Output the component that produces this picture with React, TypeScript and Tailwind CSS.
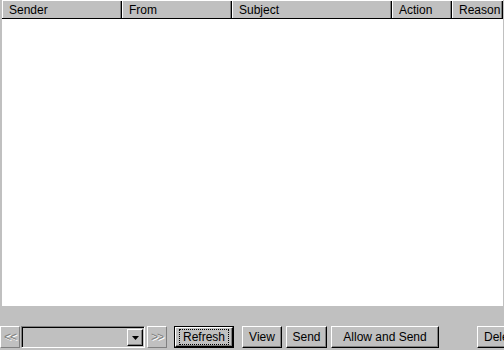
import React from "react";

const cols = [
  { label: "Sender", w: "w-[120px]" },
  { label: "From", w: "w-[110px]" },
  { label: "Subject", w: "w-[160px]" },
  { label: "Action", w: "w-[60px]" },
  { label: "Reason", w: "flex-1" },
];

function Btn({ children, className = "" }: { children: React.ReactNode; className?: string }) {
  return (
    <div
      className={`shrink-0 h-[22px] bg-[#c0c0c0] border border-t-white border-l-white border-r-black border-b-black shadow-[inset_-1px_-1px_0_#808080] flex items-center justify-center text-[12px] text-black ${className}`}
    >
      {children}
    </div>
  );
}

export default function App() {
  return (
    <div className="w-[504px] h-[350px] bg-[#c0c0c0] flex flex-col overflow-hidden font-['Liberation_Sans',Arial,sans-serif]">
      {/* list view */}
      <div className="h-[306px] pl-[2px] pr-[1px] flex flex-col">
        <div className="flex flex-col flex-1 bg-white">
          <div className="flex h-[19px] bg-[#c0c0c0] border-t border-white border-b border-b-black">
            {cols.map((c) => (
              <div
                key={c.label}
                className={`${c.w} h-full flex items-center pl-[7px] text-[12px] text-black border-r border-r-black shadow-[inset_1px_0_0_white,inset_-1px_0_0_#808080] overflow-hidden whitespace-nowrap`}
              >
                {c.label}
              </div>
            ))}
          </div>
          <div className="flex-1 bg-white" />
        </div>
      </div>

      {/* toolbar */}
      <div className="flex items-start flex-1 pt-[20px] overflow-hidden">
        <div className="shrink-0 w-[20px] h-[22px] border border-t-white border-l-white border-r-[#808080] border-b-[#808080] flex items-center justify-center text-[12px] text-[#808080] tracking-[-1px] [text-shadow:1px_1px_0_white]">
          &lt;&lt;
        </div>
        <div className="shrink-0 ml-[1px] w-[124px] h-[22px] bg-[#c0c0c0] border border-t-[#808080] border-l-[#808080] border-r-white border-b-white shadow-[inset_1px_1px_0_black] flex justify-end items-center pr-[1px]">
          <div className="w-[16px] h-[17px] mt-[1px] bg-[#c0c0c0] border border-t-white border-l-white border-r-black border-b-black shadow-[inset_-1px_-1px_0_#808080] flex items-center justify-center">
            <svg width="7" height="4" viewBox="0 0 7 4">
              <path d="M0 0h7L3.5 4z" fill="black" />
            </svg>
          </div>
        </div>
        <div className="shrink-0 ml-[2px] w-[20px] h-[22px] border border-t-white border-l-white border-r-[#808080] border-b-[#808080] flex items-center justify-center text-[12px] text-[#808080] tracking-[-1px] [text-shadow:1px_1px_0_white]">
          &gt;&gt;
        </div>
        <div className="shrink-0 ml-[7px] w-[60px] h-[22px] border border-black flex">
          <Btn className="flex-1 h-full">
            <span className="outline outline-1 outline-dotted outline-black px-[3px] leading-[14px]">Refresh</span>
          </Btn>
        </div>
        <Btn className="ml-[8px] w-[40px]">View</Btn>
        <Btn className="ml-[4px] w-[41px]">Send</Btn>
        <Btn className="ml-[4px] w-[108px]">Allow and Send</Btn>
        <Btn className="ml-[38px] w-[60px] justify-start pl-[6px]">Delete</Btn>
      </div>
    </div>
  );
}
